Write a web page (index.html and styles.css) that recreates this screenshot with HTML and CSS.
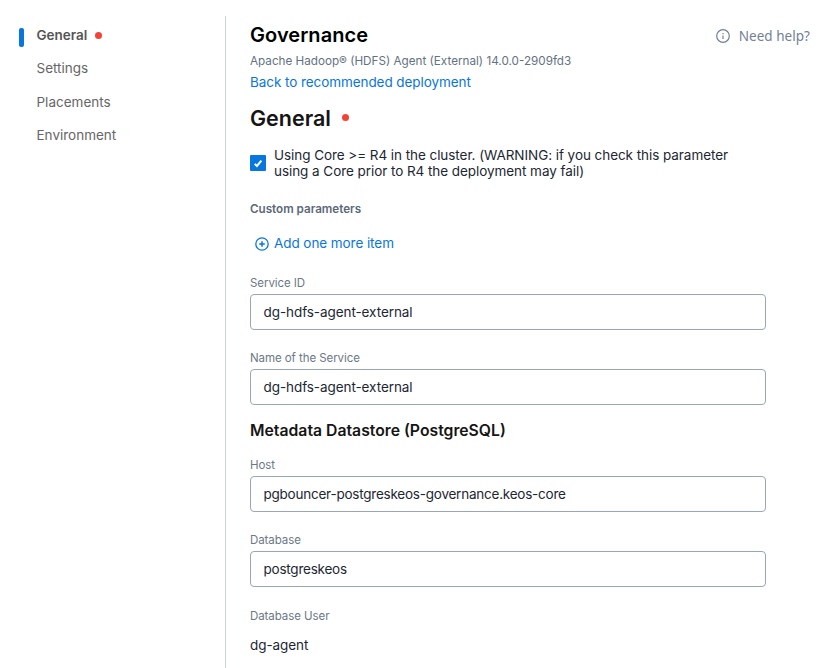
FILE: index.html
```html
<!DOCTYPE html>
<html lang="en">
<head>
<meta charset="utf-8">
<title>Governance</title>
<link rel="stylesheet" href="styles.css">
</head>
<body>
<div class="page">
  <nav class="sidebar">
    <a class="nav-item active"><span>General</span><i class="dot"></i></a>
    <a class="nav-item"><span>Settings</span></a>
    <a class="nav-item"><span>Placements</span></a>
    <a class="nav-item"><span>Environment</span></a>
  </nav>
  <main class="content">
    <header class="header">
      <h1 class="title">Governance</h1>
      <a class="help">
        <svg class="help-icon" viewBox="0 0 14 14" fill="none" stroke="currentColor"><circle cx="7" cy="7" r="6.3" stroke-width="1.2"/><path d="M7 6.4v3.5M7 4v1.2" stroke-width="1.2"/></svg>
        <span>Need help?</span>
      </a>
    </header>
    <p class="subtitle">Apache Hadoop® (HDFS) Agent (External) 14.0.0-2909fd3</p>
    <a class="back">Back to recommended deployment</a>
    <h2 class="section"><span>General</span><i class="dot dot-large"></i></h2>
    <label class="check">
      <span class="box"><svg viewBox="0 0 16 16" fill="none" stroke="#fff" stroke-width="2"><path d="M4.7 8.9l2.2 2.1 4.5-5.4"/></svg></span>
      <span class="check-text">Using Core &gt;= R4 in the cluster. (WARNING: if you check this parameter<br>using a Core prior to R4 the deployment may fail)</span>
    </label>
    <h4 class="custom">Custom parameters</h4>
    <a class="add"><svg class="add-icon" viewBox="0 0 14 14" fill="none" stroke="currentColor"><circle cx="7" cy="7" r="6.2" stroke-width="1.3"/><path d="M4.2 7h5.6M7 4.2v5.6" stroke-width="1.5"/></svg><span>Add one more item</span></a>
    <div class="field"><span class="label">Service ID</span><div class="input"><span class="value">dg-hdfs-agent-external</span></div></div>
    <div class="field"><span class="label">Name of the Service</span><div class="input"><span class="value">dg-hdfs-agent-external</span></div></div>
    <h3 class="subsection">Metadata Datastore (PostgreSQL)</h3>
    <div class="field"><span class="label">Host</span><div class="input"><span class="value tight">pgbouncer-postgreskeos-governance.keos-core</span></div></div>
    <div class="field"><span class="label">Database</span><div class="input"><span class="value tight">postgreskeos</span></div></div>
    <div class="field static"><span class="label">Database User</span><span class="plain">dg-agent</span></div>
  </main>
</div>
</body>
</html>
```
FILE: styles.css
```css
* { box-sizing: border-box; margin: 0; padding: 0; }
body { font-family: Inter, "Liberation Sans", sans-serif; font-size: 13.5px; letter-spacing: -0.07px; color: #1c2733; background: #fff; overflow: hidden; }
.page { display: flex; height: 668px; overflow: hidden; }
.sidebar { width: 225px; padding: 25px 0 0 19px; }
.nav-item { display: flex; align-items: center; height: 20px; margin-bottom: 13.4px; padding-left: 17.5px; font-size: 13.5px; line-height: 18px; letter-spacing: 0; color: #666; }
.nav-item.active { padding-left: 0; font-weight: 600; color: #555; }
.nav-item.active::before { content: ""; width: 5px; height: 19px; margin: 5px 12.5px 0 0; border-radius: 2px; background: #0776df; }
.dot { width: 7px; height: 7px; margin-left: 7.5px; border-radius: 50%; background: #f44336; }
.content { flex: 1; margin-top: 16px; padding: 6px 25px 0 24px; border-left: 1px solid #cbd2dc; }
.header { display: flex; justify-content: space-between; height: 28px; }
.title { font-size: 20px; font-weight: 600; line-height: 26px; letter-spacing: 0.05px; color: #000; }
.help { display: flex; align-items: center; gap: 9px; height: 28px; color: #728096; font-family: "Noto Sans", sans-serif; font-size: 13.5px; letter-spacing: 0.03px; }
.help span { line-height: 20px; }
.help-icon, .add-icon { width: 14px; height: 14px; }
.subtitle { height: 22px; font-size: 11.7px; line-height: 22px; letter-spacing: 0; color: #647282; }
.back { display: block; height: 21px; line-height: 20px; color: #0776df; }
.section { display: flex; align-items: center; height: 30px; margin-top: 10px; font-size: 21.5px; font-weight: 600; line-height: 30px; letter-spacing: 0; color: #151515; }
.dot-large { margin: -1px 0 0 11px; }
.check { display: flex; gap: 8px; margin-top: 14px; height: 34px; line-height: 16px; letter-spacing: -0.06px; white-space: nowrap; }
.box { width: 16px; height: 16px; margin-top: 8px; border-radius: 1px; background: #0776df; }
.box svg { display: block; width: 16px; height: 16px; }
.custom { height: 18px; margin-top: 19px; font-size: 11.65px; font-weight: 600; line-height: 18px; letter-spacing: 0; color: #5b6878; }
.add { display: flex; align-items: center; gap: 5px; height: 20px; margin-top: 16px; padding-left: 5px; color: #0776df; }
.add span { line-height: 18px; margin-top: -2px; }
.field { width: 516px; height: 55px; margin-bottom: 20px; }
.add + .field { margin-top: 21px; }
.label { display: block; height: 19px; font-size: 11.5px; line-height: 16px; color: #6b7888; }
.input { display: flex; align-items: center; height: 36px; padding-left: 12.5px; border: 1px solid #98a7b7; border-radius: 4px; }
.value { line-height: 18px; margin-top: -1px; }
.tight { letter-spacing: -0.23px; }
.subsection { height: 20px; margin: -4px 0 16px; font-size: 15.75px; font-weight: 600; line-height: 20px; letter-spacing: 0; color: #151515; }
.static { margin-top: 21px; }
.plain { display: block; margin-top: 8px; line-height: 20px; }
```
